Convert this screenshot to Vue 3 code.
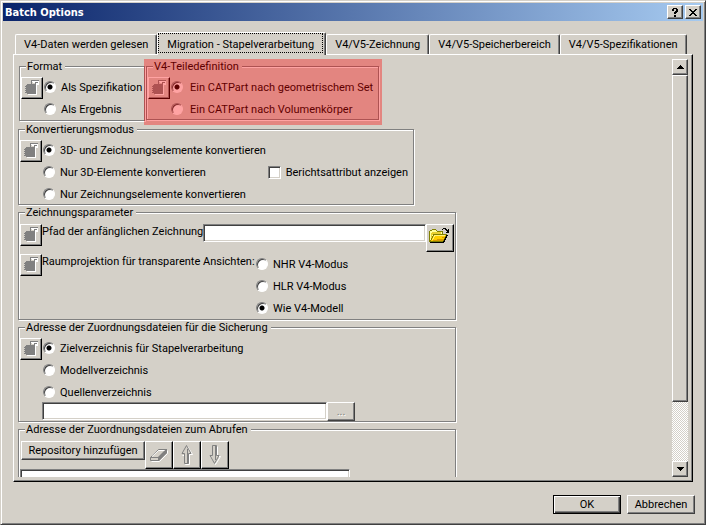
<script setup>
import { ref, h } from 'vue'

const tabs = [
  'V4-Daten werden gelesen',
  'Migration - Stapelverarbeitung',
  'V4/V5-Zeichnung',
  'V4/V5-Speicherbereich',
  'V4/V5-Spezifikationen',
]
const activeTab = ref(1)

const format = ref('Als Spezifikation')
const part = ref('Ein CATPart nach geometrischem Set')
const mode = ref('3D- und Zeichnungselemente konvertieren')
const view = ref('Wie V4-Modell')
const target = ref('Zielverzeichnis für Stapelverarbeitung')
const report = ref(false)
const drawingPath = ref('')
const sourcePath = ref('')

const LockIcon = () =>
  h('svg', { width: 16, height: 16, viewBox: '0 0 16 16', 'shape-rendering': 'crispEdges', 'aria-hidden': 'true' }, [
    h('path', { fill: '#fff', d: 'M12 5h1v10H4v-1h8zM8 1h7v4h-3V4h2V2H8z' }),
    h('path', { fill: '#808080', d: 'M3 4h9v10H3v-1H1v-1h1v-1H1v-1h1V9H1V8h1V7H1V6h1V5h1z' }),
    h('path', { fill: '#808080', d: 'M7 0h8v1H8v3H7z' }),
    h('path', { fill: '#fff', d: 'M9 1h6v3h-4V3H9z' }),
    h('path', { fill: '#808080', d: 'M11 2h3v1h-2v1h-1z' }),
  ])
</script>

<template>
  <div class="dialog">
    <header class="titlebar">
      <h1>Batch Options</h1>
      <button class="cap" type="button" aria-label="Hilfe">
        <svg width="8" height="9" viewBox="0 0 8 9" shape-rendering="crispEdges"><path d="M2 0h4v1h1v3H6v1H5v1H3V4h1V3h1V1H3v2H1V1h1zM3 7h2v2H3z" /></svg>
      </button>
      <button class="cap" type="button" aria-label="Schließen">
        <svg width="8" height="7" viewBox="0 0 8 7" shape-rendering="crispEdges"><path d="M0 0h2v1h1v1h2V1h1V0h2v1H7v1H6v1H5v1h1v1h1v1h1v1H6V6H5V5H3v1H2v1H0V6h1V5h1V4h1V3H2V2H1V1H0z" /></svg>
      </button>
    </header>

    <div class="tabs" role="tablist">
      <button
        v-for="(t, i) in tabs"
        :key="t"
        type="button"
        role="tab"
        class="tab"
        :class="{ active: i === activeTab }"
        :aria-selected="i === activeTab"
        @click="activeTab = i"
      ><span>{{ t }}</span></button>
    </div>

    <main class="panel">
      <div class="content">
        <div class="pair">
          <fieldset class="group format">
            <legend>Format</legend>
            <div class="line">
              <button class="lockbtn" type="button" disabled aria-label="Gesperrt"><LockIcon /></button>
              <div class="radios">
                <label v-for="o in ['Als Spezifikation', 'Als Ergebnis']" :key="o"><input v-model="format" type="radio" name="format" :value="o" />{{ o }}</label>
              </div>
            </div>
          </fieldset>
          <div class="marked">
            <fieldset class="group part">
              <legend>V4-Teiledefinition</legend>
              <div class="line">
                <button class="lockbtn" type="button" disabled aria-label="Gesperrt"><LockIcon /></button>
                <div class="radios">
                  <label v-for="o in ['Ein CATPart nach geometrischem Set', 'Ein CATPart nach Volumenkörper']" :key="o"><input v-model="part" type="radio" name="part" :value="o" />{{ o }}</label>
                </div>
              </div>
            </fieldset>
          </div>
        </div>

        <fieldset class="group mode">
          <legend>Konvertierungsmodus</legend>
          <div class="line">
            <button class="lockbtn" type="button" disabled aria-label="Gesperrt"><LockIcon /></button>
            <div class="radios">
              <label v-for="o in ['3D- und Zeichnungselemente konvertieren', 'Nur 3D-Elemente konvertieren', 'Nur Zeichnungselemente konvertieren']" :key="o"><input v-model="mode" type="radio" name="mode" :value="o" />{{ o }}</label>
            </div>
            <label class="check"><input v-model="report" type="checkbox" />Berichtsattribut anzeigen</label>
          </div>
        </fieldset>

        <fieldset class="group wide drawing">
          <legend>Zeichnungsparameter</legend>
          <div class="line">
            <button class="lockbtn" type="button" disabled aria-label="Gesperrt"><LockIcon /></button>
            <label class="pathlabel" for="drawing-path">Pfad der anfänglichen Zeichnung</label>
            <input id="drawing-path" v-model="drawingPath" class="field" type="text" />
            <button class="tool folder" type="button" aria-label="Durchsuchen">
              <svg width="20" height="16" viewBox="0 0 20 16" shape-rendering="crispEdges" aria-hidden="true">
                <path fill="#808000" d="M3 1h4v1h1v1h6v4h-1v1H5v2H4v2H3v3H1v-1H0V3h1V2h2z" />
                <path fill="#ffff9c" d="M3 2h4v1h1v1h5v2H4v2H3v3H2v3H1V3h2z" />
                <path fill="#e8cf30" d="M3 4h9v2H4v1H3v3H2V5h1z" />
                <path fill="#000" d="M14 7h5v1h-1v2h-1v2h-1v2h-1v1H1v-1h13v-2h1v-2h1V8h-2z" />
                <path fill="#808000" d="M4 6h14v1h-1v2h-1v2h-1v2h-1v1H1v-2h1v-2h1V8h1z" />
                <path fill="#ffce00" d="M5 7h12l-1 2-1 2-1 2H2l1-2 1-2z" />
                <path fill="#fff27a" d="M5 7h11v1H6v1H5v2H4v1H3v-1h1V9h1z" />
                <path fill="#d79b00" d="M8 11h7l-1 2H4v-1h4zM13 9h3v1h-3z" />
                <path fill="#000" d="M13 1h1V0h3v1h1v1h1V1h1v4h-3V4h1V3h-1V2h-1V1h-2v1h-1z" />
              </svg>
            </button>
          </div>
          <div class="line">
            <button class="lockbtn" type="button" disabled aria-label="Gesperrt"><LockIcon /></button>
            <span id="view-label" class="viewlabel">Raumprojektion für transparente Ansichten:</span>
            <div class="radios" role="radiogroup" aria-labelledby="view-label">
              <label v-for="o in ['NHR V4-Modus', 'HLR V4-Modus', 'Wie V4-Modell']" :key="o"><input v-model="view" type="radio" name="view" :value="o" />{{ o }}</label>
            </div>
          </div>
        </fieldset>

        <fieldset class="group wide">
          <legend>Adresse der Zuordnungsdateien für die Sicherung</legend>
          <div class="line">
            <button class="lockbtn" type="button" disabled aria-label="Gesperrt"><LockIcon /></button>
            <div class="radios">
              <label v-for="o in ['Zielverzeichnis für Stapelverarbeitung', 'Modellverzeichnis', 'Quellenverzeichnis']" :key="o"><input v-model="target" type="radio" name="target" :value="o" />{{ o }}</label>
            </div>
          </div>
          <div class="line source">
            <input v-model="sourcePath" class="field" type="text" aria-label="Quellenverzeichnis" />
            <button class="push dots" type="button" disabled>...</button>
          </div>
        </fieldset>

        <fieldset class="group wide">
          <legend>Adresse der Zuordnungsdateien zum Abrufen</legend>
          <div class="line tools">
            <button class="push repo" type="button">Repository hinzufügen</button>
            <button class="tool" type="button" disabled aria-label="Entfernen">
              <svg width="20" height="18" viewBox="0 0 20 18" aria-hidden="true">
                <path fill="none" stroke="#fff" d="M2.500 15.500h8l8-8v-3" />
                <path fill="#d4d0c8" stroke="#808080" d="M1.500 11.500l8-8h8l-8 8z" />
                <path fill="#808080" d="M9 11l8-8h1v4l-8 8H9z" />
                <path fill="none" stroke="#fff" d="M3 10.500l6.500-6h6" />
                <path fill="none" stroke="#808080" d="M1.500 11.500v3h8" />
              </svg>
            </button>
            <button class="tool" type="button" disabled aria-label="Nach oben">
              <svg width="12" height="20" viewBox="0 0 12 20" aria-hidden="true">
                <path fill="none" stroke="#fff" d="M6.500 1.500l5 8h-3v10h-4v-9h-3" />
                <path fill="#d4d0c8" stroke="#808080" d="M5.500 .5l4.500 8h-2.500v10h-4v-10h-2.500z" />
                <path stroke="#808080" d="M6.500 4v14" />
              </svg>
            </button>
            <button class="tool" type="button" disabled aria-label="Nach unten">
              <svg width="12" height="20" viewBox="0 0 12 20" aria-hidden="true">
                <path fill="none" stroke="#fff" d="M8.500 1.500v10h3l-5 8-5-8" />
                <path fill="#d4d0c8" stroke="#808080" d="M5.500 18.500l4.500-8h-2.500v-10h-4v10h-2.500z" />
                <path stroke="#808080" d="M6.500 1v14" />
              </svg>
            </button>
          </div>
          <div class="list" role="listbox" aria-label="Repositories"></div>
        </fieldset>
      </div>

      <div class="scrollbar">
        <button class="arrow" type="button" aria-label="Nach oben blättern"><svg width="7" height="4" viewBox="0 0 7 4" shape-rendering="crispEdges"><path d="M3 0h1v1h1v1h1v1h1v1H0V3h1V2h1V1h1z" /></svg></button>
        <div class="thumb"></div>
        <div class="track"></div>
        <button class="arrow" type="button" aria-label="Nach unten blättern"><svg width="7" height="4" viewBox="0 0 7 4" shape-rendering="crispEdges"><path d="M0 0h7v1H6v1H5v1H4v1H3V3H2V2H1V1H0z" /></svg></button>
      </div>
    </main>

    <footer class="actions">
      <button class="push default" type="button">OK</button>
      <button class="push" type="button">Abbrechen</button>
    </footer>
  </div>
</template>

<style>
body {
  margin: 0;
  background: #d4d0c8;
}
</style>

<style scoped>
.dialog,
.dialog * {
  box-sizing: border-box;
}
.dialog {
  display: flex;
  flex-direction: column;
  height: 100vh;
  padding: 1px;
  border: 1px solid;
  border-color: #d4d0c8 #404040 #404040 #d4d0c8;
  box-shadow: inset 1px 1px #fff, inset -1px -1px #808080;
  background: #d4d0c8;
  color: #000;
  font: 11px/13px Tahoma, Roboto, "Liberation Sans", sans-serif;
  white-space: nowrap;
}
button,
input {
  margin: 0;
  padding: 0;
  border-radius: 0;
  color: inherit;
  font: inherit;
}
svg {
  display: block;
}
.titlebar {
  display: flex;
  align-items: center;
  gap: 2px;
  flex: none;
  height: 18px;
  margin: 1px 1px 0;
  padding: 0 2px;
  background: linear-gradient(90deg, #0a246a, #a6caf0);
}
h1 {
  flex: 1;
  margin: 0;
  color: #fff;
  font: bold 11px/13px Tahoma, "DejaVu Sans Condensed", sans-serif;
}
.cap,
.push,
.arrow,
.thumb {
  display: flex;
  align-items: center;
  justify-content: center;
  border: 1px solid;
  border-color: #fff #404040 #404040 #fff;
  box-shadow: inset -1px -1px #808080;
  background: #d4d0c8;
}
.cap {
  width: 16px;
  height: 14px;
}
.tabs {
  display: flex;
  align-items: flex-end;
  flex: none;
  height: 33px;
  padding: 0 13px;
}
.tab {
  height: 20px;
  padding: 0 8px;
  border: 1px solid;
  border-color: #fff #404040 transparent #fff;
  border-bottom: 0;
  border-radius: 2px 2px 0 0;
  box-shadow: inset -1px 0 #808080;
  background: #d4d0c8;
}
.tab.active {
  height: 23px;
  margin-bottom: -1px;
  padding: 0 2px 2px 0;
  z-index: 1;
}
.tab.active span {
  display: flex;
  align-items: center;
  height: 20px;
  padding: 2px 8px 0;
  border: 1px dotted #000;
}
.panel {
  display: flex;
  flex: 1;
  min-height: 0;
  margin: 0 11px;
  padding: 4px;
  border: 1px solid;
  border-color: #fff #000 #000 #fff;
  box-shadow: inset -1px -1px #808080;
}
.content {
  display: flex;
  flex-direction: column;
  align-items: flex-start;
  gap: 1px;
  flex: 1;
  min-width: 0;
  overflow: hidden;
}
.group {
  flex: none;
  min-width: 0;
  margin: 0;
  padding: 4px 1px 0;
  border: 1px solid #808080;
  box-shadow: inset 1px 1px #fff, 1px 1px #fff;
}
legend {
  margin-left: 5px;
  padding: 0 3px 0 1px;
  background: #d4d0c8;
}
.pair {
  display: flex;
  flex: none;
  height: 63px;
}
.format {
  width: 126px;
  height: 61px;
  margin: 1px 0 0 1px;
}
.marked {
  position: relative;
  width: 238px;
  height: 66px;
  margin-left: -1px;
  padding: 1px 3px 0 2px;
}
.marked::after {
  content: "";
  position: absolute;
  inset: 0;
  background: rgba(255, 0, 0, 0.36);
  pointer-events: none;
}
.part .radios label {
  gap: 7px;
}
.mode {
  width: 396px;
}
.wide {
  width: 438px;
}
.line {
  display: flex;
  align-items: flex-start;
}
.lockbtn {
  flex: none;
  width: 22px;
  height: 22px;
  padding: 2px;
  border: 1px solid;
  border-color: #fff #000 #000 #fff;
  box-shadow: inset -1px -1px #808080;
  background: #d4d0c8;
}
.radios {
  display: flex;
  flex-direction: column;
  gap: 2px;
  padding-left: 1px;
}
.radios label,
.check {
  display: flex;
  align-items: center;
  gap: 5px;
  height: 20px;
}
input[type="radio"] {
  appearance: none;
  width: 12px;
  height: 12px;
  border: 1px solid;
  border-color: #808080 #fff #fff #808080;
  border-radius: 50%;
  box-shadow: inset 1px 1px #404040;
  background: #fff;
}
input[type="radio"]:checked {
  background: radial-gradient(circle at 50% 50%, #000 2px, #fff 3px);
}
input[type="checkbox"] {
  appearance: none;
  width: 13px;
  height: 13px;
  border: 1px solid;
  border-color: #808080 #fff #fff #808080;
  box-shadow: inset 1px 1px #404040, inset -1px -1px #d4d0c8;
  background: #fff;
}
.check {
  margin: 22px 4px 0 auto;
}
.drawing {
  padding: 5px 1px 1px;
}
.drawing .line + .line {
  padding-top: 2px;
}
.pathlabel,
.viewlabel {
  flex: none;
  padding-top: 1px;
}
.pathlabel {
  min-width: 158px;
}
.viewlabel {
  min-width: 213px;
}
.field {
  flex: 1;
  min-width: 0;
  height: 18px;
  border: 1px solid;
  border-color: #808080 #fff #fff #808080;
  box-shadow: inset 1px 1px #404040, inset -1px -1px #d4d0c8;
  background: #fff;
}
.tool {
  display: flex;
  align-items: center;
  justify-content: center;
  flex: none;
  width: 28px;
  height: 28px;
  border: 1px solid;
  border-color: #fff #000 #000 #fff;
  box-shadow: inset -1px -1px #808080;
  background: #d4d0c8;
}
.folder {
  padding: 0 2px 4px 0;
}
.source {
  padding: 0 99px 0 22px;
}
.push {
  height: 19px;
}
.dots {
  width: 28px;
  color: #808080;
  text-shadow: 1px 1px #fff;
}
.tools {
  padding: 1px 0 0 1px;
}
.repo {
  width: 124px;
}
.list {
  width: 330px;
  height: 80px;
  border: 1px solid;
  border-color: #808080 #fff #fff #808080;
  box-shadow: inset 1px 1px #404040, inset -1px -1px #d4d0c8;
  background: #fff;
}
.scrollbar {
  display: flex;
  flex-direction: column;
  flex: none;
  width: 16px;
}
.arrow {
  flex: none;
  height: 16px;
}
.thumb {
  flex: 326;
}
.track {
  flex: 59;
  background: repeating-conic-gradient(#fff 0 25%, #d4d0c8 0 50%) 0 0 / 2px 2px;
}
.actions {
  display: flex;
  justify-content: flex-end;
  gap: 6px;
  flex: none;
  padding: 13px 9px 9px;
}
.actions .push {
  width: 68px;
}
.actions .default {
  border-color: #000;
  box-shadow: inset 1px 1px #fff, inset -1px -1px #404040, inset -2px -2px #808080;
}
</style>
